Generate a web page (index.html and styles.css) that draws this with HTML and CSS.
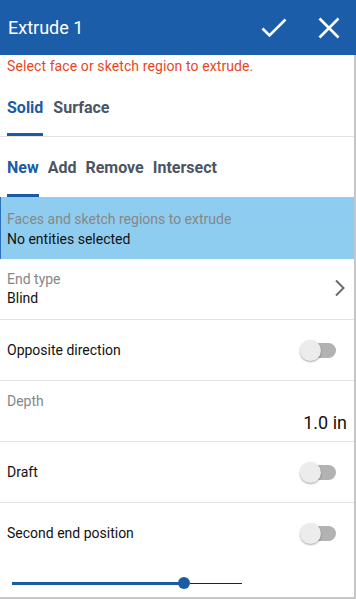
FILE: index.html
```html
<!DOCTYPE html>
<html>
<head>
<meta charset="utf-8">
<link rel="stylesheet" href="styles.css">
</head>
<body>
<div class="panel">
  <header class="header">
    <div class="title">Extrude 1</div>
    <div class="actions">
      <svg class="icon-check" width="26" height="20" viewBox="0 0 26 20"><path d="M1.5 10.5 L8.5 17.5 L24.5 1.5" fill="none" stroke="#fff" stroke-width="2.6"/></svg>
      <svg class="icon-close" width="22" height="22" viewBox="0 0 22 22"><path d="M1.5 1.5 L20.5 20.5 M20.5 1.5 L1.5 20.5" fill="none" stroke="#fff" stroke-width="2.6"/></svg>
    </div>
  </header>
  <div class="body">
    <div class="msg">Select face or sketch region to extrude.</div>
    <div class="tabs tabs-1">
      <div class="tab active">Solid</div>
      <div class="tab">Surface</div>
    </div>
    <div class="tabs tabs-2">
      <div class="tab active">New</div>
      <div class="tab">Add</div>
      <div class="tab">Remove</div>
      <div class="tab">Intersect</div>
    </div>
    <div class="selection">
      <div class="label">Faces and sketch regions to extrude</div>
      <div class="value">No entities selected</div>
    </div>
    <div class="row row-two">
      <div>
        <div class="label">End type</div>
        <div class="value">Blind</div>
      </div>
      <svg class="chev" width="12" height="18" viewBox="0 0 12 18"><path d="M2 1.5 L9.5 9 L2 16.5" fill="none" stroke="#6b6b6b" stroke-width="2"/></svg>
    </div>
    <div class="row">
      <div class="text">Opposite direction</div>
      <div class="toggle"><span class="knob"></span></div>
    </div>
    <div class="row row-depth">
      <div class="label">Depth</div>
      <div class="depth-val">1.0 in</div>
    </div>
    <div class="row">
      <div class="text">Draft</div>
      <div class="toggle"><span class="knob"></span></div>
    </div>
    <div class="row row-last">
      <div class="text">Second end position</div>
      <div class="toggle"><span class="knob"></span></div>
    </div>
    <div class="slider-wrap">
      <div class="slider">
        <div class="fill"></div>
        <div class="thumb"></div>
        <div class="rest"></div>
      </div>
    </div>
  </div>
</div>
</body>
</html>
```

FILE: styles.css
```css
* { box-sizing: border-box; }
html, body { margin: 0; padding: 0; background: #fff; }
body { font-family: Roboto, "Liberation Sans", sans-serif; width: 356px; height: 599px; overflow: hidden; }

.panel { width: 356px; height: 599px; display: flex; flex-direction: column; }

.header {
  height: 55px;
  background: #1b5da9;
  display: flex;
  align-items: center;
  justify-content: space-between;
  padding: 0 16px 0 8px;
  flex-shrink: 0;
}
.title { color: #fff; font-size: 18px; margin-top: -1px; }
.actions { display: flex; align-items: center; gap: 31px; }
.icon-check { display: block; margin-top: 1px; }
.icon-close { display: block; }

.body {
  flex: 1;
  border-right: 2px solid #c6c6c6;
  border-bottom: 2px solid #c6c6c6;
  display: flex;
  flex-direction: column;
}

.msg {
  color: #e5471d;
  font-size: 14px;
  letter-spacing: 0.1px;
  padding: 3px 7px 0;
  height: 25px;
  line-height: 16px;
}

.tabs {
  display: flex;
  gap: 10px;
  padding: 0 7px;
  align-items: flex-end;
}
.tabs-1 { height: 57px; border-bottom: 1px solid #e2e2e2; }
.tabs-2 { height: 60px; gap: 9px; }
.tab {
  font-size: 16px;
  font-weight: bold;
  color: #4b5563;
  height: 100%;
  display: flex;
  align-items: center;
  border-bottom: 3px solid transparent;
  padding-bottom: 1px;
}
.tabs-1 .tab { padding-top: 3px; }
.tabs-2 .tab { padding-top: 5px; }
.tab.active { color: #1a5ba6; border-bottom-color: #1a5ba6; }

.selection {
  background: #8fcdf0;
  border-left: 1px solid #2a6fb8;
  height: 62px;
  padding: 13px 7px 0 6px;
}
.label { color: #878787; font-size: 14px; line-height: 19px; }
.value { color: #111; font-size: 14px; line-height: 19px; }
.selection .value { margin-top: 1px; }

.row {
  height: 61px;
  border-bottom: 1px solid #e2e2e2;
  display: flex;
  align-items: center;
  justify-content: space-between;
  padding: 0 18px 0 7px;
  flex-shrink: 0;
}
.row-last { border-bottom: none; height: 60px; }
.row-two { padding-right: 8px; }
.row-two > div { margin-top: -1px; }
.text { font-size: 14px; color: #111; }

.chev { display: block; margin-top: -2px; }

.toggle {
  position: relative;
  width: 34px;
  height: 15px;
  background: #b2b2b2;
  border-radius: 8px;
}
.knob {
  position: absolute;
  left: -2px;
  top: -3px;
  width: 21px;
  height: 21px;
  border-radius: 50%;
  background: #ececec;
  box-shadow: 0 1px 2px rgba(0,0,0,0.35);
}

.row-depth {
  flex-direction: column;
  align-items: stretch;
  justify-content: flex-start;
  padding: 11px 7px 0 7px;
}
.row-depth .label { line-height: 18px; }
.depth-val { text-align: right; font-size: 18px; color: #111; line-height: 22px; margin-top: 2px; }

.slider-wrap { padding: 14px 0 0 12px; }
.slider { display: flex; align-items: center; width: 230px; height: 12px; }
.fill { width: 167px; height: 3px; background: #1a5ba6; }
.thumb { width: 12px; height: 12px; border-radius: 50%; background: #1a5ba6; margin-left: -1px; }
.rest { flex: 1; height: 1px; background: #222; }
```
